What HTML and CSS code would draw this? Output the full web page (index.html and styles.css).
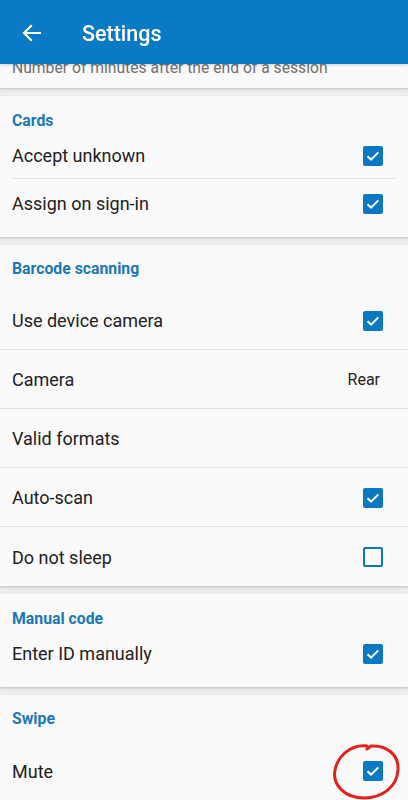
FILE: index.html
```html
<!DOCTYPE html>
<html>
<head>
<meta charset="utf-8">
<link rel="stylesheet" href="styles.css">
</head>
<body>
<header class="appbar">
  <svg class="back" width="24" height="24" viewBox="0 0 24 24"><path d="M20 12H5M11 5l-7 7 7 7" fill="none" stroke="#fff" stroke-width="2.2" stroke-linecap="square" stroke-linejoin="miter"/></svg>
  <span class="title">Settings</span>
</header>
<main class="list">
  <section class="card first">
    <p class="summary">Number of minutes after the end of a session</p>
  </section>

  <section class="card compact">
    <h2 class="cat">Cards</h2>
    <div class="row inset"><span>Accept unknown</span><i class="cb on"></i></div>
    <div class="row"><span>Assign on sign-in</span><i class="cb on"></i></div>
  </section>

  <section class="card tall">
    <h2 class="cat">Barcode scanning</h2>
    <div class="row line"><span>Use device camera</span><i class="cb on"></i></div>
    <div class="row line"><span>Camera</span><span class="val">Rear</span></div>
    <div class="row line"><span>Valid formats</span></div>
    <div class="row line"><span>Auto-scan</span><i class="cb on"></i></div>
    <div class="row"><span>Do not sleep</span><i class="cb"></i></div>
  </section>

  <section class="card compact">
    <h2 class="cat">Manual code</h2>
    <div class="row"><span>Enter ID manually</span><i class="cb on"></i></div>
  </section>

  <section class="card tall swipe">
    <h2 class="cat">Swipe</h2>
    <div class="row"><span>Mute</span><i class="cb on"></i>
      <svg class="mark" width="70" height="58" viewBox="0 0 70 58"><path d="M36 4 C21 2 7 13 4 28 C1 43 14 56 33 56 C51 56 66 45 67 28 C68 13 56 3 40 4 L36 7" fill="none" stroke="#e3201b" stroke-width="3" stroke-linecap="round"/></svg>
    </div>
  </section>
</main>
</body>
</html>
```

FILE: styles.css
```css
* { box-sizing: border-box; }
html, body { margin: 0; padding: 0; }
body {
  width: 408px;
  height: 800px;
  overflow: hidden;
  background: #ededed;
  font-family: Roboto, "Liberation Sans", sans-serif;
  color: #212121;
}
.appbar {
  position: fixed;
  top: 0; left: 0; right: 0;
  height: 64px;
  background: #0a7ac4;
  display: flex;
  align-items: center;
  padding: 0 0 0 20px;
  z-index: 2;
  box-shadow: 0 1px 3px rgba(0,0,0,.18);
}
.back { display: block; margin-top: 2px; }
.title {
  margin-left: 38px;
  color: #fff;
  font-size: 21.5px;
  font-weight: 500;
  margin-top: 2px;
}
.list {
  display: flex;
  flex-direction: column;
  gap: 8px;
}
.card {
  background: #fafafa;
  box-shadow: 0 1px 2px rgba(0,0,0,.14), 0 2px 3px rgba(0,0,0,.05);
}
.first { padding: 58px 12px 10px; }
.summary {
  margin: 0;
  font-size: 15.7px;
  line-height: 20px;
  color: #707070;
}
.cat {
  margin: 0;
  font-size: 15.8px;
  font-weight: 700;
  line-height: 20px;
  color: #1a78b6;
  padding: 0 12px;
}
.compact { padding-top: 15px; padding-bottom: 10px; }
.compact .row { height: 48px; }
.tall { padding-top: 14px; }
.tall .cat { padding-bottom: 12px; }
.tall .row { height: 59px; }
.swipe { flex: 1; min-height: 120px; }
.row {
  position: relative;
  display: flex;
  align-items: center;
  justify-content: space-between;
  padding: 1px 25px 0 12px;
  font-size: 18px;
}
.row.inset::after {
  content: "";
  position: absolute;
  left: 12px; right: 12px; bottom: 0;
  height: 1px;
  background: #e2e2e2;
}
.row.line { border-bottom: 1px solid #e2e2e2; }
.val { font-size: 16px; margin-right: 3px; }
.cb {
  width: 20px;
  height: 20px;
  border: 2px solid #0b78c2;
  border-radius: 2px;
  display: block;
}
.cb.on {
  background: #0b78c2 url("data:image/svg+xml,%3Csvg xmlns='http://www.w3.org/2000/svg' viewBox='0 0 20 20'%3E%3Cpath d='M4.5 10.2l3.6 3.4 7.2-7.2' fill='none' stroke='%23fff' stroke-width='2'/%3E%3C/svg%3E") center / 20px 20px no-repeat;
}
.mark {
  position: absolute;
  right: 7px;
  top: 1px;
}
```
